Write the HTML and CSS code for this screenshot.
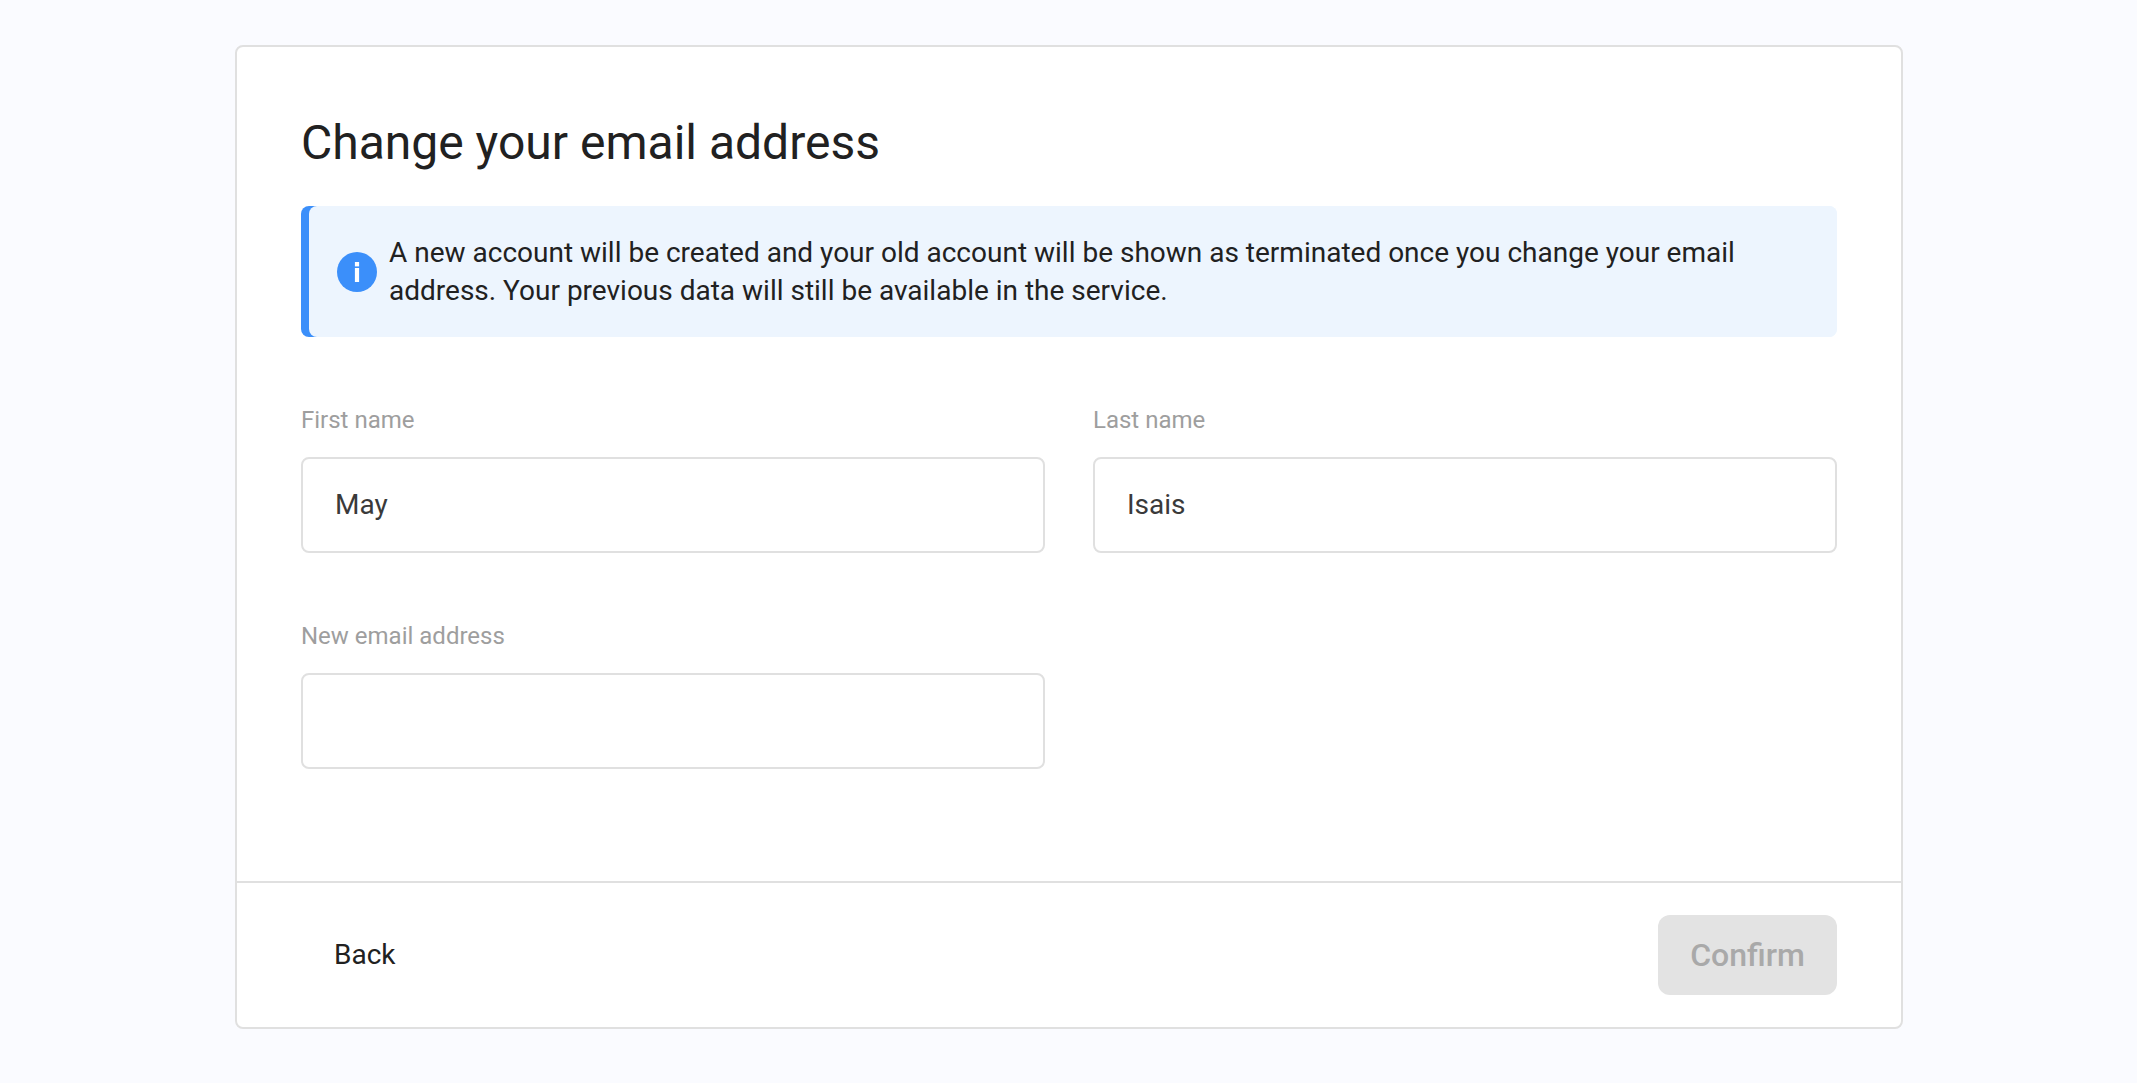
FILE: index.html
```html
<!DOCTYPE html>
<html lang="en">
<head>
<meta charset="utf-8">
<title>Change your email address</title>
<link rel="stylesheet" href="styles.css">
</head>
<body>
<main class="card">
  <form class="content">
    <h1 class="title">Change your email address</h1>
    <div class="notice">
      <div class="notice-body">
        <svg class="notice-icon" viewBox="0 0 40 40" aria-hidden="true">
          <circle cx="20" cy="20" r="20" fill="#3b8ffa"/>
          <rect x="17.9" y="10" width="4.2" height="4.4" fill="#fff"/>
          <rect x="17.9" y="16" width="4.2" height="14" fill="#fff"/>
        </svg>
        <p class="notice-text">A new account will be created and your old account will be shown as terminated once you change your email address. Your previous data will still be available in the service.</p>
      </div>
    </div>
    <div class="fields">
      <label class="field">
        <span class="field-label">First name</span>
        <input class="field-input" type="text" value="May">
      </label>
      <label class="field">
        <span class="field-label">Last name</span>
        <input class="field-input" type="text" value="Isais">
      </label>
      <label class="field">
        <span class="field-label">New email address</span>
        <input class="field-input" type="email">
      </label>
    </div>
  </form>
  <footer class="actions">
    <button class="btn btn-back" type="button">Back</button>
    <button class="btn btn-confirm" type="button" disabled>Confirm</button>
  </footer>
</main>
</body>
</html>
```
FILE: styles.css
```css
* { box-sizing: border-box; }
html, body { height: 100%; }
body {
  margin: 0;
  background: #fafbff;
  font-family: Roboto, "Liberation Sans", sans-serif;
  color: #212121;
  padding: 45px 0 0 235px;
}
.card {
  width: 1668px;
  height: 984px;
  background: #fff;
  border: 2px solid #e0e0e0;
  border-radius: 8px;
  display: flex;
  flex-direction: column;
}
.content {
  flex: 1;
  padding: 64px 64px 0;
}
.title {
  margin: 0;
  font-size: 48px;
  line-height: 64px;
  font-weight: 400;
  color: #212121;
}
.notice {
  margin-top: 31px;
  height: 131px;
  display: flex;
  padding-left: 8px;
  background: linear-gradient(90deg, #3b8ffa 50%, #edf5fe 50%);
  border-radius: 8px;
}
.notice-body {
  flex: 1;
  display: flex;
  align-items: center;
  gap: 12px;
  padding: 0 32px 0 28px;
  background: #edf5fe;
  border-radius: 8px;
}
.notice-icon { width: 40px; height: 40px; flex: none; }
.notice-text {
  margin: 0;
  font-size: 28px;
  line-height: 38px;
  color: #212121;
}
.fields {
  margin-top: 67px;
  display: grid;
  grid-template-columns: 1fr 1fr;
  column-gap: 48px;
  row-gap: 67px;
}
.field { display: flex; flex-direction: column; }
.field-label {
  font-size: 24px;
  line-height: 32px;
  margin-bottom: 21px;
  color: #9e9e9e;
}
.field-input {
  width: 100%;
  height: 96px;
  padding: 0 32px 2px;
  border: 2px solid #e0e0e0;
  border-radius: 8px;
  background: #fff;
  font-family: inherit;
  font-size: 28px;
  color: #3a3a3a;
  outline: none;
}
.actions {
  height: 146px;
  padding: 32px 64px;
  border-top: 2px solid #e0e0e0;
  display: flex;
  justify-content: space-between;
  align-items: center;
}
.btn {
  height: 80px;
  padding: 0 32px;
  border: 2px solid transparent;
  border-radius: 12px;
  font-family: inherit;
  font-size: 28px;
  background: transparent;
}
.btn-back {
  padding: 0 31px 2px;
  color: #212121;
}
.btn-confirm {
  width: 179px;
  padding: 0;
  background: #e3e3e3;
  color: #a9a9a9;
  font-size: 32px;
  font-weight: 500;
}
```
